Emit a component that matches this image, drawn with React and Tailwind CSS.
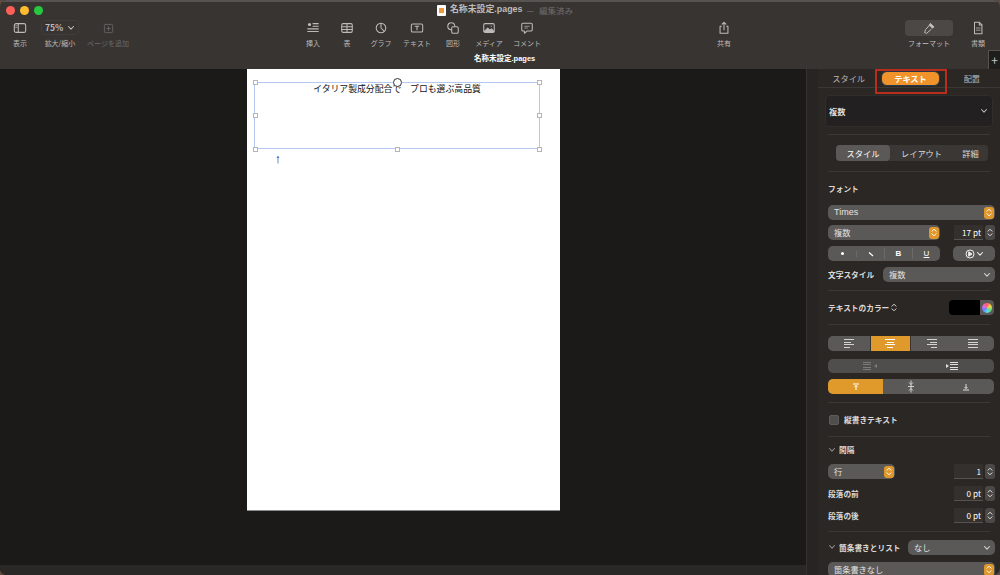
import React from "react";

const Glyph = ({ children, size = 14, box = 16 }) => (
  <svg width={size} height={size} viewBox={`0 0 ${box} ${box}`} fill="none" stroke="currentColor" strokeWidth="1.2" strokeLinecap="round" strokeLinejoin="round">
    {children}
  </svg>
);

const ToolItem = ({ label, width, className = "", dim, children }) => (
  <div className={`flex flex-col items-center shrink-0 ${width} ${className} ${dim ? "text-[#6c6967]" : "text-[#bdbab8]"}`}>
    <div className="h-[16px] flex items-center justify-center">{children}</div>
    <div className="mt-[2px] text-[7px] leading-[10px] whitespace-nowrap">{label}</div>
  </div>
);

const Chevron = ({ className = "" }) => (
  <svg width="8" height="6" viewBox="0 0 8 6" fill="none" stroke="currentColor" strokeWidth="1.1" strokeLinecap="round" strokeLinejoin="round" className={className}>
    <path d="M1.5 1.5 4 4.2 6.5 1.5" />
  </svg>
);

const UpDown = ({ className = "" }) => (
  <svg width="6" height="9" viewBox="0 0 6 9" fill="none" stroke="currentColor" strokeWidth="1" strokeLinecap="round" strokeLinejoin="round" className={className}>
    <path d="M1 3.2 3 1.2 5 3.2M1 5.8 3 7.8 5 5.8" />
  </svg>
);

const OrangeStep = () => (
  <span className="w-[10px] h-[12px] rounded-[3px] bg-[#e0982c] flex items-center justify-center text-white">
    <UpDown />
  </span>
);

const Popup = ({ label, className = "", stepper }) => (
  <div className={`h-[15px] rounded-[5px] bg-[#5b5957] flex items-center justify-between pl-[6px] pr-[1.5px] text-[8.2px] text-[#e4e2e0] ${className}`}>
    <span>{label}</span>
    {stepper ? <OrangeStep /> : <Chevron className="mr-[3px] text-[#d8d6d4]" />}
  </div>
);

const Stepper = () => (
  <div className="w-[10px] h-[15px] rounded-[3px] bg-[#4b4947] flex items-center justify-center text-[#e0dedc]">
    <UpDown />
  </div>
);

const NumberField = ({ value, className = "" }) => (
  <div className={`flex items-center gap-[2px] ${className}`}>
    <div className="w-[29px] h-[15px] bg-[#33302e] border-b border-[#55524f] flex items-center justify-end pr-[2px] text-[8.2px] text-white">{value}</div>
    <Stepper />
  </div>
);

const Divider = ({ className = "" }) => <div className={`h-px mx-[10px] bg-[#3b3836] ${className}`} />;

const Bars = ({ widths, align = "items-start" }) => (
  <span className={`flex flex-col gap-[1.5px] w-[10px] ${align}`}>
    {widths.map((w, i) => (
      <span key={i} className={`h-px bg-current block ${w}`} />
    ))}
  </span>
);

const Handle = ({ className }) => <span className={`absolute w-[5px] h-[5px] -ml-[2.5px] -mt-[2.5px] bg-white border border-[#b5b5b5] ${className}`} />;

export default function App() {
  return (
    <div className="w-[1000px] h-[575px] overflow-hidden bg-[#5a4a40] font-['Noto_Sans_CJK_JP','Noto_Sans',sans-serif]">
      <div className="w-full h-full rounded-[7px] overflow-hidden flex flex-col">
        {/* title + toolbar */}
        <div className="h-[69px] shrink-0 bg-[#383432] border-t-2 border-[#565351] flex flex-col">
          <div className="h-[16px] flex items-center pl-[6px]">
            <span className="w-[9px] h-[9px] rounded-full bg-[#fe5f57]" />
            <span className="w-[9px] h-[9px] rounded-full bg-[#febc2e] ml-[5px]" />
            <span className="w-[9px] h-[9px] rounded-full bg-[#27c840] ml-[5px]" />
            <span className="w-[9px] h-[11px] ml-[394px] rounded-[1px] bg-white flex items-center justify-center">
              <span className="w-[5px] h-[5px] bg-[#ee9a3c] block" />
            </span>
            <span className="ml-[4px] text-[8.9px] font-bold text-[#bfbcba] font-['Liberation_Sans','Noto_Sans_CJK_JP',sans-serif]">名称未設定.pages</span>
            <span className="ml-[4px] text-[8.5px] text-[#7b7876]">—</span>
            <span className="ml-[5px] text-[8.5px] text-[#6f6c6a]">編集済み</span>
          </div>

          <div className="flex h-[32px] items-start pt-[2px]">
            <ToolItem label="表示" width="w-[40px]">
              <Glyph><rect x="1.5" y="3" width="13" height="10" rx="2" /><path d="M6 3v10" /><path d="M3 5.5h1.5M3 7.5h1.5" strokeWidth="0.8" /></Glyph>
            </ToolItem>
            <div className="w-[40px] shrink-0 flex flex-col items-center text-[#bdbab8]">
              <div className="w-[38px] h-[15px] rounded-[4px] border border-[#413d3b] flex items-center justify-center gap-[4px] text-[8.5px] font-semibold">
                75% <Chevron />
              </div>
              <div className="mt-[3px] text-[7px] leading-[10px] whitespace-nowrap">拡大/縮小</div>
            </div>
            <ToolItem label="ページを追加" width="w-[56px]" dim>
              <Glyph size={11}><rect x="2" y="2" width="12" height="12" rx="1.5" /><path d="M8 5.5v5M5.5 8h5" /></Glyph>
            </ToolItem>

            <ToolItem label="挿入" width="w-[36px]" className="ml-[159px]">
              <Glyph><circle cx="4" cy="4" r="1.8" fill="currentColor" stroke="none" /><path d="M8 3h6M8 6h6M2 9h12M2 12h12" /></Glyph>
            </ToolItem>
            <ToolItem label="表" width="w-[32px]">
              <Glyph><rect x="2" y="3" width="12" height="10" rx="1.5" /><path d="M2 6.5h12M2 9.8h12M8 3v10" /></Glyph>
            </ToolItem>
            <ToolItem label="グラフ" width="w-[36px]">
              <Glyph><circle cx="8" cy="8" r="5.5" /><path d="M8 2.5V8l3.5 3.5" /></Glyph>
            </ToolItem>
            <ToolItem label="テキスト" width="w-[36px]">
              <Glyph><rect x="1.5" y="3.5" width="13" height="9" rx="1.5" /><path d="M6 6h4M8 6v4" /></Glyph>
            </ToolItem>
            <ToolItem label="図形" width="w-[36px]">
              <Glyph><circle cx="6" cy="6" r="4" /><rect x="6.5" y="6.5" width="7.5" height="7.5" rx="1.5" fill="#383432" /></Glyph>
            </ToolItem>
            <ToolItem label="メディア" width="w-[36px]">
              <Glyph><rect x="2" y="3" width="12" height="10" rx="1.5" /><path d="M2.5 12 6.5 8l2.5 2.5L11 9l2.5 3z" fill="currentColor" /><circle cx="10.5" cy="5.8" r="0.8" fill="currentColor" stroke="none" /></Glyph>
            </ToolItem>
            <ToolItem label="コメント" width="w-[40px]">
              <Glyph><path d="M3.5 2.5h9a1.5 1.5 0 0 1 1.5 1.5v6a1.5 1.5 0 0 1-1.5 1.5H8l-3 2.5v-2.5H3.5A1.5 1.5 0 0 1 2 10V4a1.5 1.5 0 0 1 1.5-1.5z" /><path d="M5.5 6h5M5.5 8h3" strokeWidth="0.8" /></Glyph>
            </ToolItem>

            <ToolItem label="共有" width="w-[40px]" className="ml-[157px]">
              <Glyph><path d="M5 6H3.5v8h9V6H11M8 10V1.5M5.8 3.7 8 1.5l2.2 2.2" /></Glyph>
            </ToolItem>
            <div className="ml-[161px] w-[48px] shrink-0 flex flex-col items-center text-[#c4c1bf]">
              <div className="w-[48px] h-[16px] rounded-[4px] bg-[#4b4846] flex items-center justify-center">
                <Glyph size={13}><path d="m9.5 2 4 4-2 1.5L8 4z" fill="currentColor" /><path d="M8 4 3 9.5l-1 3.5 2.5 1L10 9" /></Glyph>
              </div>
              <div className="mt-[2px] text-[7px] leading-[10px] whitespace-nowrap">フォーマット</div>
            </div>
            <ToolItem label="書類" width="w-[30px]" className="ml-[10px]">
              <Glyph><path d="M4 1.5h5.5L12.5 4.5v10H4z" /><path d="M9.5 1.5v3h3" /><path d="M6 8h4.5M6 10.5h4.5" strokeWidth="0.9" /></Glyph>
            </ToolItem>
          </div>

          <div className="flex-1 flex items-start relative">
            <span className="ml-[474px] mt-[3px] text-[7.5px] leading-[12px] font-bold text-white font-['Liberation_Sans','Noto_Sans_CJK_JP',sans-serif]">名称未設定.pages</span>
            <span className="absolute right-0 top-0 w-[12px] h-[19px] bg-[#1f1d1c] border-l border-t border-[#555250] text-[#c8c5c3] text-[12px] leading-[17px] text-center">+</span>
          </div>
        </div>

        <div className="flex-1 flex min-h-0">
          {/* canvas */}
          <div className="w-[806px] shrink-0 flex flex-col bg-[#1c1a19]">
            <div className="flex-1 min-h-0">
              <div className="relative ml-[247px] w-[313px] h-[442px] bg-white border-b border-[#8d8d8d]">
                <div className="absolute left-[7px] top-[13px] w-[286px] h-[67px] border border-[#b6c8f2]">
                  <p className="text-center mt-[-1px] text-[8.85px] leading-[14px] text-[#111] whitespace-nowrap font-['Liberation_Serif','Noto_Sans_CJK_JP',serif]">イタリア製成分配合で　プロも選ぶ高品質</p>
                </div>
                <Handle className="left-[8px] top-[13.5px]" />
                <Handle className="left-[150.5px] top-[80px]" />
                <Handle className="left-[8px] top-[46.5px]" />
                <Handle className="left-[8px] top-[80px]" />
                <Handle className="left-[292.5px] top-[13.5px]" />
                <Handle className="left-[292.5px] top-[46.5px]" />
                <Handle className="left-[292.5px] top-[80px]" />
                <span className="absolute left-[146px] top-[9px] w-[9px] h-[9px] rounded-full bg-white border border-[#333]" />
                <svg className="absolute left-[29px] top-[86px]" width="4" height="9" viewBox="0 0 4 9">
                  <path d="M2 0.5 3.4 3H2.4v5.5h-.8V3H.6z" fill="#3f76c9" />
                </svg>
              </div>
            </div>
            <div className="h-[10px] shrink-0 bg-[#292826]" />
          </div>
          <div className="w-[12px] shrink-0 bg-[#272523] border-l border-[#34312f]" />

          {/* format panel */}
          <div className="relative flex-1 min-w-0 bg-[#2a2725] overflow-hidden text-[7.7px] text-[#dcdad8]">
            <div className="h-[19px] flex items-center border-b border-[#3b3836] text-[8.2px]">
              <span className="w-[62px] text-center text-[#b9b6b4]">スタイル</span>
              <span className="w-[59px] h-[15px] ml-[2px] rounded-[6px] bg-[#f0932b] border border-[#22384f] text-white font-bold flex items-center justify-center">テキスト</span>
              <span className="ml-[4px] w-[57px] text-center text-[#b9b6b4]">配置</span>
            </div>
            <div className="absolute left-[57px] top-0 w-[72px] h-[25px] border-2 border-[#b92d1d]" />

            <div className="mt-[7px] mx-[7px] h-[32px] rounded-[4px] bg-[#222020] border border-[#302d2b] flex items-center justify-between pl-[3px] pr-[4px] font-semibold text-[8.2px]">
              複数 <Chevron className="text-[#b5b2b0]" />
            </div>
            <Divider className="mt-[7px]" />

            <div className="mt-[10px] ml-[18px] w-[152px] h-[16px] rounded-[4px] bg-[#3a3735] flex items-center text-[8.2px] text-[#dcdad8]">
              <span className="w-[54px] h-full rounded-[4px] bg-[#5b5957] text-white flex items-center justify-center">スタイル</span>
              <span className="w-[63px] text-center">レイアウト</span>
              <span className="w-[35px] text-center">詳細</span>
            </div>
            <Divider className="mt-[10px]" />

            <div className="mt-[11px] ml-[10px] font-semibold leading-[12px]">フォント</div>
            <Popup label="Times" stepper className="mt-[10px] ml-[10px] w-[167px] font-['Liberation_Sans',sans-serif] text-[9px]" />
            <div className="mt-[5px] ml-[10px] flex items-center">
              <Popup label="複数" stepper className="w-[112px]" />
              <NumberField value="17 pt" className="ml-[14px]" />
            </div>

            <div className="mt-[6px] ml-[10px] flex items-center">
              <div className="w-[112px] h-[15px] rounded-[5px] bg-[#5b5957] grid grid-cols-4 items-center text-white text-center text-[8px] font-bold">
                <span className="flex justify-center"><span className="w-[3px] h-[3px] rounded-full bg-white" /></span>
                <span className="flex justify-center border-l border-[#6c6a68]">
                  <svg width="6" height="6" viewBox="0 0 6 6"><path d="M1 1.5 5 5" stroke="white" strokeWidth="1.2" /></svg>
                </span>
                <span className="border-l border-[#6c6a68] leading-[11px] font-['Liberation_Sans',sans-serif]">B</span>
                <span className="border-l border-[#6c6a68] leading-[11px] underline font-normal font-['Liberation_Sans',sans-serif]">U</span>
              </div>
              <div className="ml-[13px] w-[42px] h-[15px] rounded-[5px] bg-[#5b5957] flex items-center justify-center gap-[1px] text-[#eeeeee]">
                <svg width="10" height="10" viewBox="0 0 10 10" fill="none" stroke="currentColor" strokeWidth="1">
                  <circle cx="5" cy="5" r="4" /><path d="M3.7 2.8 7 5 3.7 7.2z" fill="currentColor" />
                </svg>
                <Chevron />
              </div>
            </div>

            <div className="mt-[6px] ml-[10px] flex items-center justify-between mr-[5px]">
              <span className="font-semibold">文字スタイル</span>
              <Popup label="複数" className="w-[112px]" />
            </div>
            <Divider className="mt-[8px]" />

            <div className="mt-[9px] ml-[10px] mr-[6px] flex items-center justify-between h-[15px]">
              <span className="flex items-center gap-[2px] font-semibold">テキストのカラー <UpDown /></span>
              <span className="w-[45px] h-[15px] rounded-[4px] bg-black flex justify-end overflow-hidden">
                <span className="w-[14px] h-full bg-[#5b5957] flex items-center justify-center">
                  <span className="w-[10px] h-[10px] rounded-full bg-[conic-gradient(#ff5a5a,#f6d84a,#63e06f,#5fd4f0,#6a7dff,#e66be0,#ff5a5a)]" />
                </span>
              </span>
            </div>
            <Divider className="mt-[9px]" />

            <div className="mt-[11px] ml-[10px] w-[166px] h-[15px] rounded-[5px] bg-[#5b5957] grid grid-cols-4 overflow-hidden text-[#d6d4d2]">
              <span className="flex items-center justify-center"><Bars widths={["w-[10px]", "w-[7px]", "w-[10px]", "w-[6px]"]} /></span>
              <span className="flex items-center justify-center bg-[#e09a2b] text-white border-x border-[#3a3530]"><Bars widths={["w-[10px]", "w-[7px]", "w-[10px]", "w-[6px]"]} align="items-center" /></span>
              <span className="flex items-center justify-center"><Bars widths={["w-[10px]", "w-[7px]", "w-[10px]", "w-[6px]"]} align="items-end" /></span>
              <span className="flex items-center justify-center"><Bars widths={["w-[10px]", "w-[10px]", "w-[10px]", "w-[10px]"]} /></span>
            </div>

            <div className="mt-[8px] ml-[10px] w-[166px] h-[14px] rounded-[5px] bg-[#504e4c] grid grid-cols-2">
              <span className="flex items-center justify-center gap-[1px] text-[#7d7b79]">
                <Bars widths={["w-[8px]", "w-[8px]", "w-[8px]", "w-[8px]"]} />
                <span className="w-0 h-0 border-y-[2px] border-y-transparent border-r-[3px] border-r-current" />
              </span>
              <span className="flex items-center justify-center gap-[1px] text-[#e2e0de]">
                <span className="w-0 h-0 border-y-[2px] border-y-transparent border-l-[3px] border-l-current" />
                <Bars widths={["w-[8px]", "w-[8px]", "w-[8px]", "w-[8px]"]} />
              </span>
            </div>

            <div className="mt-[6px] ml-[10px] w-[166px] h-[15px] rounded-[5px] bg-[#5b5957] grid grid-cols-3 overflow-hidden text-[#e0dedc]">
              <span className="flex items-center justify-center bg-[#e09a2b] text-white">
                <svg width="8" height="8" viewBox="0 0 8 8" fill="none" stroke="currentColor"><path d="M1 1h6M4 7V2.5M2.5 4 4 2.5 5.5 4" /></svg>
              </span>
              <span className="flex items-center justify-center">
                <svg width="8" height="13" viewBox="0 0 8 13" fill="none" stroke="currentColor" strokeWidth="0.9"><path d="M4 .5v12M1 6.5h6M2 2.5l2 2 2-2M2 10.5l2-2 2 2" /></svg>
              </span>
              <span className="flex items-center justify-center">
                <svg width="8" height="8" viewBox="0 0 8 8" fill="none" stroke="currentColor"><path d="M1 7h6M4 1v4.5M2.5 4 4 5.5 5.5 4" /></svg>
              </span>
            </div>
            <Divider className="mt-[8px]" />

            <div className="mt-[11px] ml-[11px] flex items-center gap-[5px] h-[11px]">
              <span className="w-[10px] h-[10px] rounded-[2px] bg-[#504e4c] border border-[#5f5d5b]" />
              <span className="font-semibold">縦書きテキスト</span>
            </div>
            <Divider className="mt-[11px]" />

            <div className="mt-[7px] ml-[10px] flex items-center gap-[3px] h-[12px]">
              <Chevron className="text-[#8c8987]" />
              <span className="font-semibold">間隔</span>
            </div>
            <div className="mt-[8px] ml-[10px] mr-[5px] flex items-center justify-between">
              <Popup label="行" stepper className="w-[67px]" />
              <NumberField value="1" />
            </div>
            <div className="mt-[7px] ml-[10px] mr-[5px] flex items-center justify-between">
              <span className="font-semibold">段落の前</span>
              <NumberField value="0 pt" />
            </div>
            <div className="mt-[7px] ml-[10px] mr-[5px] flex items-center justify-between">
              <span className="font-semibold">段落の後</span>
              <NumberField value="0 pt" />
            </div>
            <Divider className="mt-[8px]" />

            <div className="mt-[8px] ml-[10px] mr-[5px] flex items-center justify-between">
              <span className="flex items-center gap-[3px] font-semibold">
                <Chevron className="text-[#8c8987]" />
                箇条書きとリスト
              </span>
              <Popup label="なし" className="w-[87px]" />
            </div>
            <Popup label="箇条書きなし" stepper className="mt-[7px] ml-[10px] w-[167px]" />
          </div>
        </div>
      </div>
    </div>
  );
}
